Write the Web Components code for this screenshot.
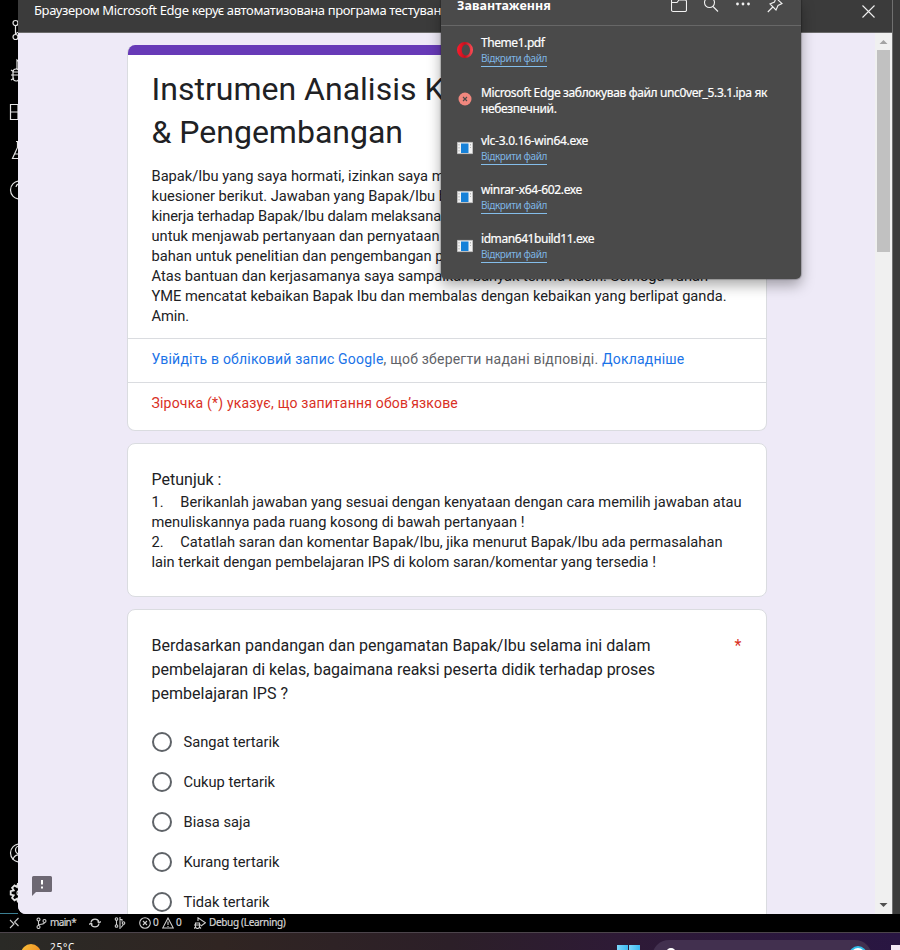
<!DOCTYPE html>
<html lang="uk">
<head>
<meta charset="utf-8">
<title>Instrumen Analisis</title>
<style>
html,body{margin:0;background:#000}
body{width:900px;height:950px;overflow:hidden}
</style>
</head>
<body>
<desktop-shell>
  <activity-bar slot="side"></activity-bar>
  <browser-window slot="main">
    <info-bar slot="info"><fit-line w="407">Браузером Microsoft Edge керує автоматизована програма тестуван</fit-line></info-bar>
    <form-page slot="page">
      <form-card accent>
        <text-block kind="title"><fit-line w="293">Instrumen Analisis K</fit-line><fit-line w="251.5">&amp; Pengembangan</fit-line></text-block>
        <text-block kind="intro">
          <fit-line w="293">Bapak/Ibu yang saya hormati, izinkan saya m</fit-line>
          <fit-line w="295.5">kuesioner berikut. Jawaban yang Bapak/Ibu b</fit-line>
          <fit-line w="289.5">kinerja terhadap Bapak/Ibu dalam melaksana</fit-line>
          <fit-line w="288">untuk menjawab pertanyaan dan pernyataan</fit-line>
          <fit-line w="292">bahan untuk penelitian dan pengembangan p</fit-line>
          <fit-line w="556.5">Atas bantuan dan kerjasamanya saya sampaikan banyak terima kasih. Semoga Tuhan</fit-line>
          <fit-line w="575">YME mencatat kebaikan Bapak Ibu dan membalas dengan kebaikan yang berlipat ganda.</fit-line>
          <fit-line w="37.5">Amin.</fit-line>
        </text-block>
        <text-block kind="note"><fit-line w="533"><span style="color:#1a73e8">Увійдіть в обліковий запис Google</span>, щоб зберегти надані відповіді. <span style="color:#1a73e8">Докладніше</span></fit-line></text-block>
        <text-block kind="required"><fit-line w="306.5">Зірочка (*) указує, що запитання обов’язкове</fit-line></text-block>
      </form-card>
      <form-card>
        <text-block kind="section"><fit-line w="70">Petunjuk :</fit-line></text-block>
        <text-block kind="body">
          <fit-line w="590"><span style="margin-right:-1.5px">1. &nbsp; &nbsp; </span>Berikanlah jawaban yang sesuai dengan kenyataan dengan cara memilih jawaban atau</fit-line>
          <fit-line w="373">menuliskannya pada ruang kosong di bawah pertanyaan !</fit-line>
          <fit-line w="571"><span style="margin-right:-1.5px">2. &nbsp; &nbsp; </span>Catatlah saran dan komentar Bapak/Ibu, jika menurut Bapak/Ibu ada permasalahan</fit-line>
          <fit-line w="504.5">lain terkait dengan pembelajaran IPS di kolom saran/komentar yang tersedia !</fit-line>
        </text-block>
      </form-card>
      <form-card>
        <question-head>
          <fit-line w="499">Berdasarkan pandangan dan pengamatan Bapak/Ibu selama ini dalam</fit-line>
          <fit-line w="503.5">pembelajaran di kelas, bagaimana reaksi peserta didik terhadap proses</fit-line>
          <fit-line w="136.5">pembelajaran IPS ?</fit-line>
          <span slot="mark">*</span>
        </question-head>
        <radio-option><fit-line w="96">Sangat tertarik</fit-line></radio-option>
        <radio-option><fit-line w="91.5">Cukup tertarik</fit-line></radio-option>
        <radio-option><fit-line w="67">Biasa saja</fit-line></radio-option>
        <radio-option><fit-line w="96">Kurang tertarik</fit-line></radio-option>
        <radio-option><fit-line w="86">Tidak tertarik</fit-line></radio-option>
      </form-card>
    </form-page>
    <scroll-bar slot="page"></scroll-bar>
  </browser-window>
  <downloads-panel slot="over">
    <fit-line slot="title" w="94">Завантаження</fit-line>
    <download-item icon="opera"><fit-line w="63.5">Theme1.pdf</fit-line><fit-line slot="link" w="66">Відкрити файл</fit-line></download-item>
    <download-item icon="blocked"><fit-line w="286">Microsoft Edge заблокував файл unc0ver_5.3.1.ipa як</fit-line><fit-line w="75.5">небезпечний.</fit-line></download-item>
    <download-item icon="exe"><fit-line w="107">vlc-3.0.16-win64.exe</fit-line><fit-line slot="link" w="66">Відкрити файл</fit-line></download-item>
    <download-item icon="exe"><fit-line w="101">winrar-x64-602.exe</fit-line><fit-line slot="link" w="66">Відкрити файл</fit-line></download-item>
    <download-item icon="exe"><fit-line w="113">idman641build11.exe</fit-line><fit-line slot="link" w="66">Відкрити файл</fit-line></download-item>
  </downloads-panel>
  <status-bar slot="status"></status-bar>
  <task-bar slot="task"></task-bar>
</desktop-shell>

<script>
const define = (name, html, setup) => {
  const tpl = document.createElement('template');
  tpl.innerHTML = html;
  customElements.define(name, class extends HTMLElement {
    constructor() {
      super();
      this.attachShadow({mode: 'open'}).append(tpl.content.cloneNode(true));
    }
    connectedCallback() { if (setup) setup(this); }
  });
};

define('desktop-shell', `<style>
:host{display:grid;position:relative;width:900px;height:950px;overflow:hidden;grid-template:914px 18px 18px/18px 874px 8px;background:#000}
.edge{background:#3b3b3b;border-left:1px solid #707070;box-sizing:border-box}
.full{grid-column:1/-1;overflow:hidden}
</style><slot name="side"></slot><slot name="main"></slot><div class="edge"></div>
<div class="full"><slot name="status"></slot></div><div class="full"><slot name="task"></slot></div><slot name="over"></slot>`);

define('activity-bar', `<style>
:host{display:flex;flex-direction:column;justify-content:space-between;overflow:hidden;box-sizing:border-box;height:914px;padding:10px 0 0 8px;border-bottom:1px solid #3b7f93}
div{display:flex;flex-direction:column}
svg{width:24px;height:40px;fill:none;stroke:#e4e4e4;stroke-width:1.2}
</style>
<div>
<svg viewBox="0 0 24 40"><circle cx="7.500" cy="13" r="2.500"/><circle cx="7.500" cy="27" r="2.500"/><path d="M7.500 15.500v9M17 19c0 4-9 2-9 5"/><circle cx="17" cy="16" r="2.500"/></svg>
<svg viewBox="0 0 24 40"><path d="M9 19V10l13 9-9 6M3 25h10M3 20l3 2M3 30l3-2M5 22h6v6a3 3 0 0 1-6 0zM5 22a3 3 0 0 1 6 0"/></svg>
<svg viewBox="0 0 24 40"><path d="M2.500 14.500h15v15h-15zM2.500 22h15M10 14.500v15"/></svg>
<svg viewBox="0 0 24 40"><path d="M8 11.500h9M9.500 11.500v6L4.500 28.500h16L15.500 17.500v-6M7 24h11"/></svg>
<svg viewBox="0 0 24 40"><circle cx="11.500" cy="20" r="9"/><path d="M8 17a3.500 3.500 0 1 1 4 4v3"/></svg>
</div>
<div>
<svg viewBox="0 0 24 40"><circle cx="11.500" cy="20" r="9"/><circle cx="11.500" cy="17" r="4"/><path d="M5 27c1-7 12-7 13 0"/></svg>
<svg viewBox="0 0 24 40"><path stroke-width="1.8" d="M9.800 11h3.400l.7 3 2.600-1.600 2.400 2.400-1.600 2.600 3 .7v3.500l-3 .7 1.600 2.600-2.400 2.400-2.600-1.600-.7 3H9.800l-.7-3-2.600 1.600-2.400-2.400 1.600-2.600-3-.7v-3.500l3-.7-1.600-2.600 2.400-2.400L9.100 14z"/><circle cx="11.500" cy="20" r="2.500"/></svg>
</div>`);

define('browser-window', `<style>
:host{display:flex;flex-direction:column;height:914px;overflow:hidden;border-bottom-left-radius:8px;background:#eeeaf7}
.page{display:flex;height:881px}
</style><slot name="info"></slot><div class="page"><slot name="page"></slot></div>`);

define('info-bar', `<style>
:host{display:flex;justify-content:space-between;align-items:flex-start;box-sizing:border-box;height:33px;padding:0 17.500px 0 16px;background:#3b3b3b;border-bottom:1px solid #6b6b6b;color:#fff;font:13px/20px "Noto Sans","Open Sans",sans-serif}
svg{width:13px;height:13px;margin-top:5px;stroke:#f0f0f0;stroke-width:1.1;fill:none}
</style><slot></slot><svg viewBox="0 0 13 13"><path d="M.5.5l12 12M12.500.5l-12 12"/></svg>`);

define('form-page', `<style>
:host{display:flex;flex-direction:column;gap:12px;position:relative;box-sizing:border-box;width:857px;height:881px;padding:12px 108px 0 109px;overflow:hidden;background:#eeeaf7}
.tip{position:absolute;left:14px;top:843px;width:20px;height:20px}
</style><slot></slot>
<svg class="tip" viewBox="0 0 20 20"><path fill="#6d6873" d="M1.500 0h17A1.500 1.500 0 0 1 20 1.500v13a1.500 1.500 0 0 1-1.500 1.500H4l-4 4V1.500A1.500 1.500 0 0 1 1.500 0z"/><path fill="#fff" d="M9 4h2v4.500H9zM9 10.500h2v2H9z"/></svg>`);

define('form-card', `<style>
:host{display:block;flex:none;box-sizing:border-box;width:640px;background:#fff;border:1px solid #dadce0;border-radius:8px;overflow:hidden}
:host([accent]){border-top:0}
.bar{display:none;height:10px;margin:0 -1px;background:#673ab7}
:host([accent]) .bar{display:block}
</style><div class="bar"></div><slot></slot>`);

define('text-block', `<style>
:host{display:block;padding:0 24px 0 23.500px;color:#202124;font:14.667px/20px Roboto,sans-serif;box-sizing:border-box}
:host([kind=title]){font-size:32px;line-height:43px;padding-top:13px}
:host([kind=intro]){padding-top:12px;padding-bottom:12px}
:host([kind=note]){font-size:14px;border-top:1px solid #dadce0;color:#5f6368;height:44px;padding-top:10px}
:host([kind=required]){font-size:14px;border-top:1px solid #dadce0;color:#d93025;height:48px;padding-top:10px}
:host([kind=section]){font-size:16px;line-height:24px;padding-top:24px}
:host([kind=body]){padding-bottom:24px}
</style><slot></slot>`);

define('question-head', `<style>
:host{display:flex;justify-content:space-between;padding:24px 24.500px 16px 23.500px;color:#202124;font:16px/24px Roboto,sans-serif}
.mark{color:#d93025}
</style><div><slot></slot></div><div class="mark"><slot name="mark"></slot></div>`);

define('radio-option', `<style>
:host{display:flex;align-items:center;gap:11.500px;height:40px;padding:0 24px;color:#202124;font:14.667px/20px Roboto,sans-serif}
i{box-sizing:border-box;width:20px;height:20px;border:2px solid #5f6368;border-radius:50%}
</style><i></i><slot></slot>`);

define('scroll-bar', `<style>
:host{display:flex;flex-direction:column;align-items:center;width:17px;height:881px;background:#f0f0f0}
svg{width:17px;height:17px;flex:none}
.track{flex:1}
.thumb{width:13px;height:202px;background:#c1c1c1}
</style><svg viewBox="0 0 17 17"><path fill="#a3a3a3" d="M4.500 11 8.500 7l4 4z"/></svg><div class="track"><div class="thumb"></div></div><svg viewBox="0 0 17 17"><path fill="#505050" d="M4.500 6h8l-4 4z"/></svg>`);

define('downloads-panel', `<style>
:host{display:block;position:absolute;left:441px;top:0;width:360px;height:279px;box-sizing:border-box;background:#4a4a4a;border-radius:0 0 5px 5px;box-shadow:0 0 1px 1px rgba(0,0,0,.2),0 6px 14px rgba(0,0,0,.34);color:#fff;font-family:"Noto Sans","Open Sans",sans-serif}
header{display:flex;justify-content:space-between;height:26px;box-sizing:border-box;padding:0 18px 0 16px;border-bottom:1px solid #676767;font-size:12.500px;line-height:12px;font-weight:700}
.tools{display:flex;gap:16px}
svg{width:16px;height:18px;fill:none;stroke:#f2f2f2;stroke-width:1.1}
</style><header><div><slot name="title"></slot></div><div class="tools">
<svg viewBox="0 0 16 18"><path d="M.5-3v13a1.500 1.500 0 0 0 1.500 1.500h12a1.500 1.500 0 0 0 1.500-1.500V1.500A1.500 1.500 0 0 0 14 0H8L6 2.500H.5"/></svg>
<svg viewBox="0 0 16 18"><circle cx="6.500" cy="2.500" r="5"/><path d="M10 6.500l5 5"/></svg>
<svg viewBox="0 0 16 18" style="fill:#f2f2f2;stroke:none"><circle cx="2.500" cy="4" r="1.400"/><circle cx="8" cy="4" r="1.400"/><circle cx="13.500" cy="4" r="1.400"/></svg>
<svg viewBox="0 0 16 18"><path d="M9-2l6 5.500-4 2L9 10 3 4l4.500-2zM5.800 7L.8 12"/></svg>
</div></header><slot></slot>`);

const icons = {
  opera: '<defs><linearGradient id="g"><stop stop-color="#ff1b2d"/><stop offset=".5" stop-color="#c40f1d"/><stop offset="1" stop-color="#ff5058"/></linearGradient></defs><path fill="url(#g)" fill-rule="evenodd" d="M8 0a8 8 0 1 0 0 16A8 8 0 0 0 8 0zM9 2.500c2.500 0 4 2.500 4 5.500s-1.500 5.500-4 5.500S4.800 11 4.800 8 6.500 2.500 9 2.500z"/>',
  blocked: '<circle cx="8" cy="8" r="6.500" fill="#f1877e"/><path d="M6 6l4 4M10 6l-4 4" stroke="#4a4a4a" stroke-width="1.100"/>',
  exe: '<path fill="#f3f3f3" stroke="#c4c4c4" stroke-width=".8" d="M.400 2.400h15.200v11.200H.400z"/><path fill="#1681d8" d="M4 3.500h7.500v9.500H4z"/><path stroke="#b5b5b5" stroke-dasharray="1.500 1.500" d="M2 4v9M13.500 4v4"/>'
};
define('download-item', `<style>
:host{display:grid;grid-template-columns:16px 1fr;column-gap:8px;height:49px;box-sizing:border-box;padding:9px 16px 0;font-size:12px;line-height:16px;-webkit-text-stroke:.2px currentColor}
:host([icon=blocked]){padding-top:10px}
svg{width:16px;height:16px;margin-top:7px}
:host([icon=blocked]) svg{margin-top:6px}
.link{display:inline-block;vertical-align:top;font-size:10px;line-height:15px;color:#7eb6e4;border-bottom:1px solid #84bdea;-webkit-text-stroke:0}
.link:not(.on){display:none}
</style><svg viewBox="0 0 16 16"></svg><div><slot></slot><div class="link"><slot name="link"></slot></div></div>`, el => {
  el.shadowRoot.querySelector('svg').innerHTML = icons[el.getAttribute('icon')];
  el.shadowRoot.querySelector('.link').classList.toggle('on', !!el.querySelector('[slot=link]'));
});

define('status-bar', `<style>
:host{display:flex;align-items:center;height:17px;padding-left:8px;background:#000;color:#d6d6d6;font:10px/17px "Noto Sans","Open Sans",sans-serif;-webkit-text-stroke:.2px currentColor}
svg{width:12px;height:12px;fill:none;stroke:#cfcfcf;stroke-width:1.1}
span{display:flex;align-items:center}
</style>
<span style="width:28px"><svg viewBox="0 0 12 12"><path d="M2 3l4 4-4 4M10.500 1l-4 4 4 4"/></svg></span>
<span style="width:53px;gap:2px"><svg viewBox="0 0 12 12"><circle cx="2.500" cy="2.500" r="1.500"/><circle cx="2.500" cy="10" r="1.500"/><circle cx="8.500" cy="4" r="1.500"/><path d="M2.500 4v4.500M8.500 5.500c0 2.500-6 1-6 3"/></svg><fit-line w="26">main*</fit-line></span>
<span style="width:25px"><svg viewBox="0 0 12 12"><path d="M2 5a4.200 4.200 0 0 1 8 0M10 7a4.200 4.200 0 0 1-8 0M8.500 4.500L10 6l2-1.500M0 7.500L2 6l1.500 1.500"/></svg></span>
<span style="width:25px"><svg viewBox="0 0 12 12"><circle cx="2.500" cy="2" r="1.300"/><circle cx="2.500" cy="9" r="1.300"/><circle cx="9.500" cy="6" r="1.300"/><path d="M2.500 3v5M6 0v12M6 2.500h2v2M9.500 7.500L7 10.500"/></svg></span>
<span style="width:55px;gap:2px"><svg viewBox="0 0 12 12"><circle cx="6" cy="6" r="5.300"/><path d="M4 4l4 4M8 4l-4 4"/></svg><fit-line w="6">0</fit-line><svg viewBox="0 0 12 12" style="margin-left:1px"><path d="M6 1l5.300 10H.700zM6 4.500v3.500M6 9v1"/></svg><fit-line w="6">0</fit-line></span>
<span style="gap:3px"><svg viewBox="0 0 12 12"><path d="M4 4V.800l7.500 5L7 9M1.500 6h4v3.500a2 2 0 0 1-4 0zM0 8h7M0 11.500L1.500 10M7 11.500L5.500 10"/></svg><fit-line w="76.500">Debug (Learning)</fit-line></span>`);

define('task-bar', `<style>
:host{display:flex;box-sizing:border-box;height:18px;overflow:hidden;background:linear-gradient(90deg,#2a2a26 0,#302522 220px,#2c1f28 450px,#2e1a36 620px,#291642);border-top:1px solid #4c444b;color:#fff;font:10px/14px "Noto Sans","Open Sans",sans-serif}
.sun{width:20px;height:20px;margin:11px 9px 0 21px;border-radius:50%;background:linear-gradient(120deg,#f8c13a,#ee7f1c);flex:none}
.temp{margin-top:7px;width:567px;flex:none}
.logo{display:grid;grid-template-columns:11px 11px;gap:1px;height:22px;margin-top:12px;width:23px;flex:none}
.logo i{background:linear-gradient(90deg,#7cd8fc,#3cb9f2);height:11px}
.search{display:flex;justify-content:space-between;flex:none;box-sizing:border-box;width:220px;height:34px;margin:7px 0 0 12px;padding:6px 5px 0 14px;border-radius:17px;background:#42304f}
.lens{box-sizing:border-box;width:10px;height:10px;margin-top:2px;border:2px solid #fff;border-radius:50%}
.bing{box-sizing:border-box;width:18px;height:18px;border:2px solid #31bde9;border-radius:50%;background:#fff}
.app{width:20px;height:20px;margin:12px 0 0 19px;background:#f3e9f5;flex:none}
</style><div class="sun"></div><div class="temp"><fit-line w="25">25°C</fit-line></div>
<div class="logo"><i></i><i></i></div><div class="search"><div class="lens"></div><div class="bing"></div></div><div class="app"></div>`);

/* One text line whose tracking is set so that it spans the width in its "w" attribute. */
define('fit-line', `<style>:host{display:block;width:max-content;white-space:nowrap}</style><slot></slot>`, el => {
  el.style.letterSpacing = '0px';
  const n = el.textContent.length;
  const natural = el.getBoundingClientRect().width;
  if (natural) el.style.letterSpacing = ((+el.getAttribute('w') - natural) / n).toFixed(4) + 'px';
});
</script>
</body>
</html>
